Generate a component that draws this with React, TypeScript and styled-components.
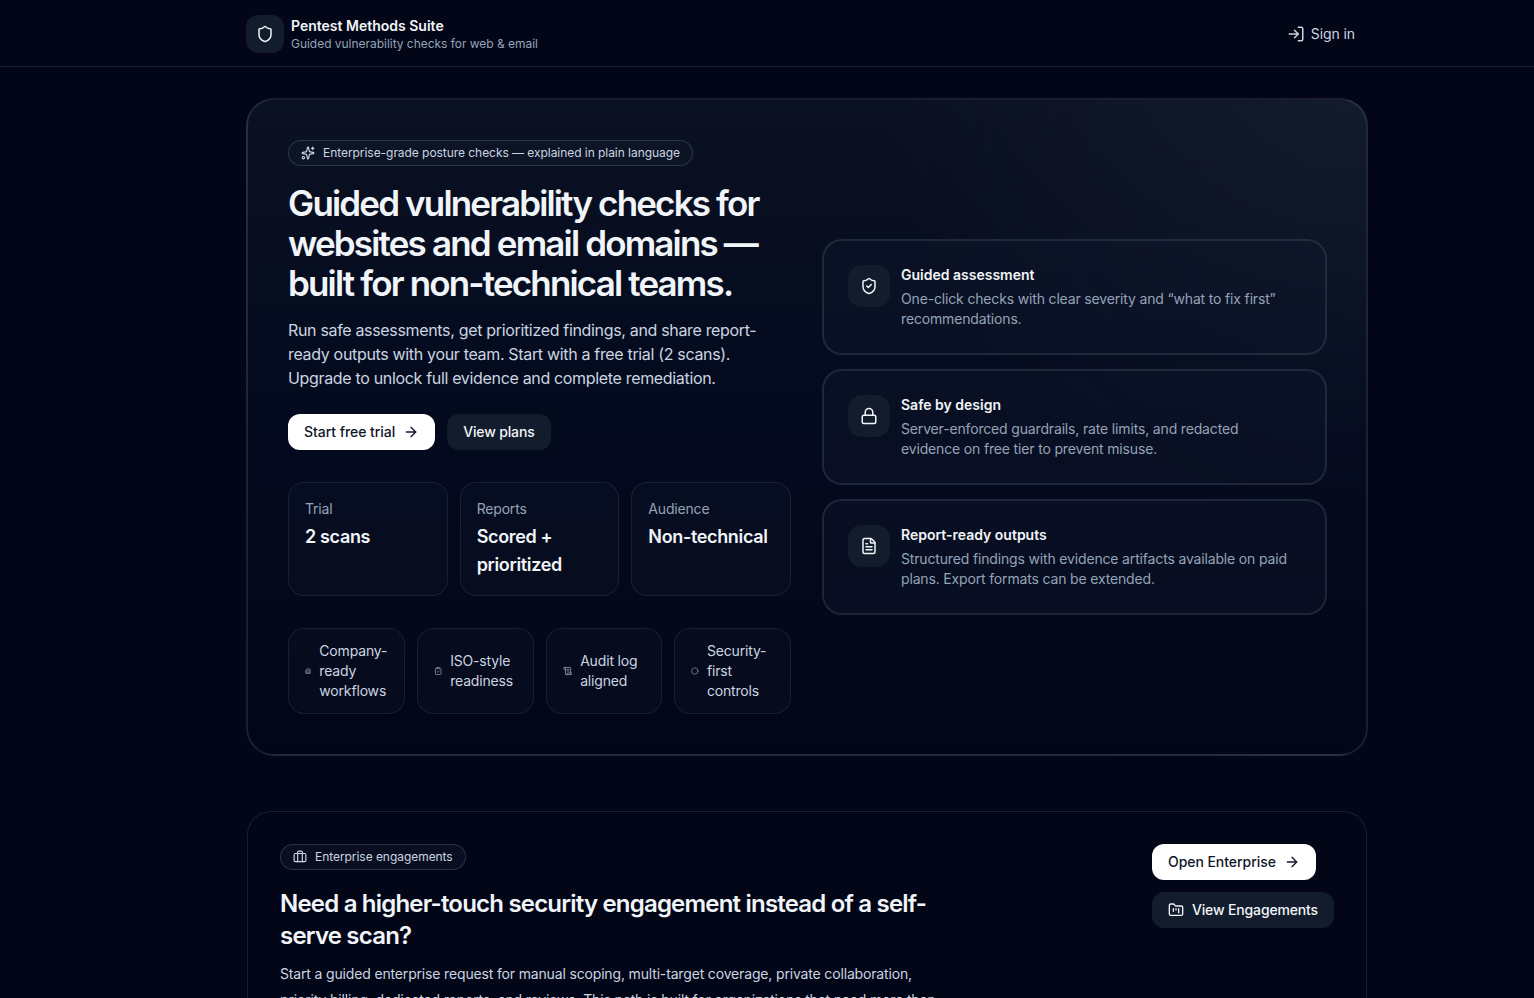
import * as React from 'react';
import styled, {createGlobalStyle} from 'styled-components';
import {
	ArrowRight,
	Briefcase,
	Building2,
	Circle,
	ClipboardCheck,
	FileText,
	FolderKanban,
	Lock,
	LogIn,
	ScrollText,
	Shield,
	ShieldCheck,
	Sparkles,
} from 'lucide-react';

const GlobalStyle = createGlobalStyle`
	html, body {
		margin: 0;
		background: #020617;
		color: #f1f5f9;
		font-family: Inter, "Noto Sans", sans-serif;
		-webkit-font-smoothing: antialiased;
	}
	* {
		box-sizing: border-box;
	}
`;

const Header = styled.header`
	height: 67px;
	border-bottom: 1px solid rgba(148, 163, 184, 0.16);
	padding: 2px 0 0 246px;
`;

const HeaderInner = styled.div`
	width: 1121px;
	height: 100%;
	display: flex;
	align-items: center;
	justify-content: space-between;
	padding-right: 12px;
`;

const Brand = styled.div`
	display: flex;
	align-items: center;
	gap: 7px;
`;

const IconTile = styled.div<{$size: number; $radius: number}>`
	width: ${props => props.$size}px;
	height: ${props => props.$size}px;
	border-radius: ${props => props.$radius}px;
	background: #131c2c;
	color: #f1f5f9;
	display: flex;
	align-items: center;
	justify-content: center;
	flex-shrink: 0;
`;

const BrandName = styled.div`
	font-size: 14px;
	line-height: 20px;
	font-weight: 600;
	color: #f1f5f9;
`;

const BrandSub = styled.div`
	font-size: 12px;
	line-height: 16px;
	letter-spacing: -0.03px;
	color: #94a3b8;
`;

const SignIn = styled.a`
	display: flex;
	align-items: center;
	gap: 6px;
	font-size: 14px;
	line-height: 20px;
	letter-spacing: -0.1px;
	color: #cbd5e1;
`;

const Main = styled.main`
	padding: 31px 0 40px 246px;
`;

const Hero = styled.section`
	width: 1122px;
	border: 2px solid rgba(148, 163, 184, 0.16);
	border-radius: 28px;
	padding: 40px 39px 40px 40px;
	background:
		radial-gradient(ellipse 480px 420px at 100% 0%, rgba(30, 41, 59, 0.42), transparent 100%),
		linear-gradient(180deg, #0a1122 0%, #040a1e 50%, #020617 100%);
	display: grid;
	grid-template-columns: 503px 505px;
	column-gap: 31px;
	align-items: center;
`;

const Pill = styled.div`
	display: inline-flex;
	align-items: center;
	gap: 8px;
	height: 26px;
	padding: 0 12px;
	border: 1px solid rgba(148, 163, 184, 0.24);
	border-radius: 999px;
	background: rgba(15, 23, 42, 0.5);
	font-size: 12px;
	line-height: 16px;
	letter-spacing: -0.05px;
	color: #cbd5e1;
`;

const Title = styled.h1`
	margin: 17px 0 0;
	font-size: 35px;
	line-height: 40px;
	font-weight: 600;
	letter-spacing: -1.84px;
	color: #f1f5f9;
`;

const Lead = styled.p`
	margin: 15px 0 0;
	font-size: 16px;
	line-height: 24px;
	letter-spacing: -0.33px;
	color: #cbd5e1;
`;

const Actions = styled.div`
	display: flex;
	gap: 12px;
	margin-top: 24px;
`;

const Button = styled.a<{$primary?: boolean}>`
	display: inline-flex;
	align-items: center;
	gap: 8px;
	height: 36px;
	padding: 0 16px;
	border-radius: 12px;
	font-size: 14px;
	line-height: 20px;
	font-weight: 500;
	letter-spacing: ${props => props.$primary ? '-0.05px' : '-0.15px'};
	background: ${props => props.$primary ? '#ffffff' : '#131c2c'};
	color: ${props => props.$primary ? '#0f172a' : '#f1f5f9'};
	width: fit-content;
`;

const Stats = styled.div`
	display: grid;
	grid-template-columns: repeat(3, minmax(0, 1fr));
	gap: 12px;
	margin-top: 32px;
`;

const Stat = styled.div`
	border: 1px solid rgba(148, 163, 184, 0.13);
	border-radius: 16px;
	padding: 16px;
	background: rgba(15, 23, 42, 0.3);
`;

const StatLabel = styled.div`
	font-size: 14px;
	line-height: 20px;
	letter-spacing: -0.18px;
	color: #94a3b8;
`;

const StatValue = styled.div`
	margin-top: 4px;
	font-size: 18px;
	line-height: 28px;
	font-weight: 600;
	letter-spacing: -0.35px;
	color: #f1f5f9;
`;

const Chips = styled.div`
	display: grid;
	grid-template-columns: repeat(4, minmax(0, 1fr));
	gap: 12px;
	margin-top: 32px;
`;

const Chip = styled.div`
	display: flex;
	align-items: center;
	gap: 8px;
	padding: 12px 16px;
	border: 1px solid rgba(148, 163, 184, 0.13);
	border-radius: 16px;
	background: rgba(15, 23, 42, 0.3);
	font-size: 14px;
	line-height: 20px;
	letter-spacing: -0.16px;
	color: #cbd5e1;

	svg {
		color: #94a3b8;
	}
`;

const Features = styled.div`
	display: flex;
	flex-direction: column;
	gap: 14px;
`;

const Feature = styled.div`
	display: flex;
	gap: 11px;
	height: 116px;
	padding: 24px;
	border: 2px solid rgba(148, 163, 184, 0.16);
	border-radius: 20px;
	background: rgba(15, 23, 42, 0.45);
`;

const FeatureTitle = styled.div`
	font-size: 14px;
	line-height: 20px;
	font-weight: 600;
	color: #f1f5f9;
`;

const FeatureText = styled.div`
	margin-top: 4px;
	font-size: 14px;
	line-height: 20px;
	letter-spacing: -0.16px;
	color: #94a3b8;
`;

const Enterprise = styled.section`
	width: 1120px;
	margin: 55px 0 0 1px;
	border: 1px solid rgba(148, 163, 184, 0.16);
	border-radius: 24px;
	padding: 32px;
	background: #020617;
	display: flex;
	justify-content: space-between;
	align-items: flex-start;
`;

const EnterpriseCopy = styled.div`
	width: 660px;
`;

const EnterpriseTitle = styled.h2`
	margin: 18px 0 0;
	font-size: 24px;
	line-height: 32px;
	font-weight: 600;
	letter-spacing: -0.8px;
	color: #f1f5f9;
`;

const EnterpriseText = styled.p`
	margin: 9px 0 0;
	font-size: 14px;
	line-height: 26px;
	letter-spacing: -0.16px;
	color: #cbd5e1;
`;

const EnterpriseActions = styled.div`
	display: flex;
	flex-direction: column;
	gap: 12px;
`;

const features = [
	{
		icon: <ShieldCheck size={18} />,
		title: 'Guided assessment',
		text: 'One-click checks with clear severity and “what to fix first” recommendations.',
	},
	{
		icon: <Lock size={18} />,
		title: 'Safe by design',
		text: 'Server-enforced guardrails, rate limits, and redacted evidence on free tier to prevent misuse.',
	},
	{
		icon: <FileText size={18} />,
		title: 'Report-ready outputs',
		text: 'Structured findings with evidence artifacts available on paid plans. Export formats can be extended.',
	},
];

const stats = [
	{label: 'Trial', value: '2 scans'},
	{label: 'Reports', value: 'Scored + prioritized'},
	{label: 'Audience', value: 'Non-technical'},
];

const chips = [
	{icon: <Building2 size={16} />, text: 'Company-ready workflows'},
	{icon: <ClipboardCheck size={16} />, text: 'ISO-style readiness'},
	{icon: <ScrollText size={16} />, text: 'Audit log aligned'},
	{icon: <Circle size={16} />, text: 'Security-first controls'},
];

export default function App() {
	return (
		<>
			<GlobalStyle />
			<Header>
				<HeaderInner>
					<Brand>
						<IconTile $size={38} $radius={12}>
							<Shield size={18} />
						</IconTile>
						<div>
							<BrandName>Pentest Methods Suite</BrandName>
							<BrandSub>Guided vulnerability checks for web &amp; email</BrandSub>
						</div>
					</Brand>
					<SignIn>
						<LogIn size={18} />
						Sign in
					</SignIn>
				</HeaderInner>
			</Header>
			<Main>
				<Hero>
					<div>
						<Pill>
							<Sparkles size={14} />
							Enterprise-grade posture checks — explained in plain language
						</Pill>
						<Title>Guided vulnerability checks for websites and email domains — built for non-technical teams.</Title>
						<Lead>
							Run safe assessments, get prioritized findings, and share report-ready outputs with your team. Start with a free trial (2 scans). Upgrade to unlock full evidence and complete remediation.
						</Lead>
						<Actions>
							<Button $primary>
								Start free trial
								<ArrowRight size={16} />
							</Button>
							<Button>View plans</Button>
						</Actions>
						<Stats>
							{stats.map(stat => (
								<Stat key={stat.label}>
									<StatLabel>{stat.label}</StatLabel>
									<StatValue>{stat.value}</StatValue>
								</Stat>
							))}
						</Stats>
						<Chips>
							{chips.map(chip => (
								<Chip key={chip.text}>
									{chip.icon}
									<span>{chip.text}</span>
								</Chip>
							))}
						</Chips>
					</div>
					<Features>
						{features.map(feature => (
							<Feature key={feature.title}>
								<IconTile $size={42} $radius={14}>{feature.icon}</IconTile>
								<div>
									<FeatureTitle>{feature.title}</FeatureTitle>
									<FeatureText>{feature.text}</FeatureText>
								</div>
							</Feature>
						))}
					</Features>
				</Hero>
				<Enterprise>
					<EnterpriseCopy>
						<Pill>
							<Briefcase size={14} />
							Enterprise engagements
						</Pill>
						<EnterpriseTitle>Need a higher-touch security engagement instead of a self-serve scan?</EnterpriseTitle>
						<EnterpriseText>
							Start a guided enterprise request for manual scoping, multi-target coverage, private collaboration, priority billing, dedicated reports, and reviews. This path is built for organizations that need more than an automated scan.
						</EnterpriseText>
					</EnterpriseCopy>
					<EnterpriseActions>
						<Button $primary>
							Open Enterprise
							<ArrowRight size={16} />
						</Button>
						<Button>
							<FolderKanban size={16} />
							View Engagements
						</Button>
					</EnterpriseActions>
				</Enterprise>
			</Main>
		</>
	);
}
